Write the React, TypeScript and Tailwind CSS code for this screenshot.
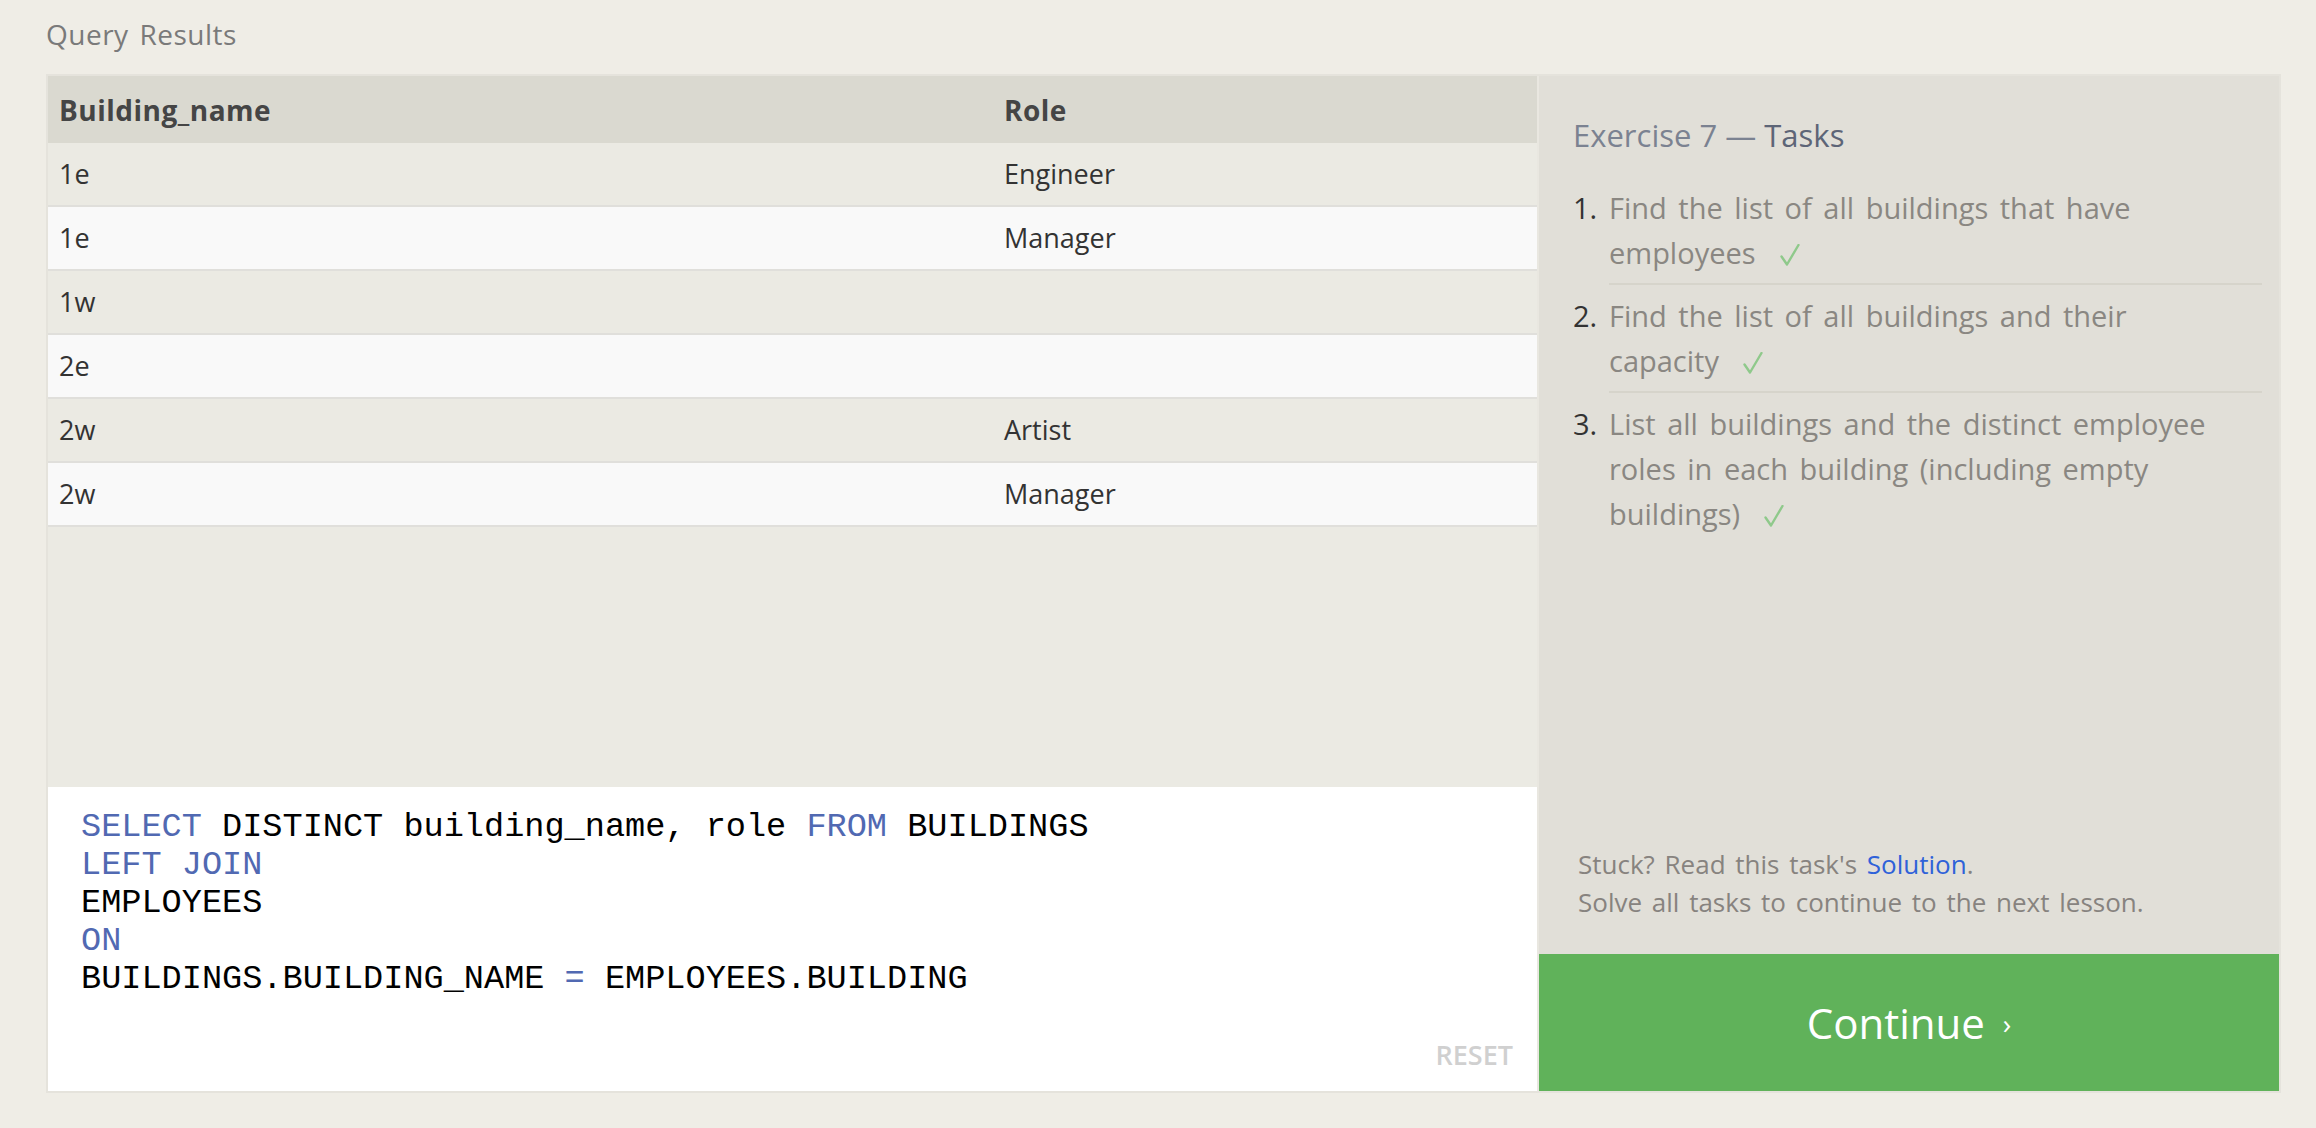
import React from 'react';

type Row = { building: string; role: string };

const rows: Row[] = [
  { building: '1e', role: 'Engineer' },
  { building: '1e', role: 'Manager' },
  { building: '1w', role: '' },
  { building: '2e', role: '' },
  { building: '2w', role: 'Artist' },
  { building: '2w', role: 'Manager' },
];

const tasks: string[][] = [
  ['Find the list of all buildings that have', 'employees'],
  ['Find the list of all buildings and their', 'capacity'],
  ['List all buildings and the distinct employee', 'roles in each building (including empty', 'buildings)'],
];

const sans = "font-['Open_Sans','Noto_Sans',sans-serif]";

function Check() {
  return (
    <svg className="ml-[24px] inline-block h-[22px] w-[20px] align-[-2px]" viewBox="0 0 20 22" fill="none">
      <path d="M1.5 12.5 L7 20.5 L18.5 1" stroke="#8fc98b" strokeWidth="2.4" strokeLinecap="round" strokeLinejoin="round" />
    </svg>
  );
}

function Kw({ children }: { children: React.ReactNode }) {
  return <span className="text-[#5169b2]">{children}</span>;
}

export default function App() {
  return (
    <div className={`min-h-screen bg-[#efede6] pl-[46px] pr-[35px] pt-[14px] ${sans}`}>
      <h2 className="mb-[20px] text-[28px] leading-[40px] tracking-[0.5px] text-[#7a7a7a] [word-spacing:3px]">Query Results</h2>

      <div className="flex h-[1019px] border-2 border-[#e5e3dc]">
        {/* results + editor */}
        <div className="flex flex-1 flex-col bg-[#ebeae3]">
          <div className="grid h-[67px] grid-cols-[945px_1fr] items-center bg-[#dad9d0] px-[11px] text-[28px] font-bold tracking-[0.5px] text-[#454545]">
            <span>Building_name</span>
            <span>Role</span>
          </div>
          {rows.map((r, i) => (
            <div
              key={i}
              className={`grid h-[64px] grid-cols-[945px_1fr] items-center border-b-2 border-[#e0dfdb] px-[11px] text-[27px] text-[#333] ${i % 2 === 0 ? 'bg-[#ebeae3]' : 'bg-[#f9f9f9]'}`}
            >
              <span>{r.building}</span>
              <span>{r.role}</span>
            </div>
          ))}
          <div className="flex-1" />

          <div className="flex h-[304px] flex-col justify-between bg-white pl-[33px] pr-[24px] pt-[21px] pb-[16px]">
            <pre className="font-['Liberation_Mono','Courier_New',monospace] text-[33.6px] leading-[38px] text-black">
              <Kw>SELECT</Kw> DISTINCT building_name, role <Kw>FROM</Kw> BUILDINGS{'\n'}
              <Kw>LEFT JOIN</Kw>{'\n'}
              EMPLOYEES{'\n'}
              <Kw>ON</Kw>{'\n'}
              BUILDINGS.BUILDING_NAME <Kw>=</Kw> EMPLOYEES.BUILDING
            </pre>
            <div className="self-end text-[27px] font-semibold leading-[40px] text-[#d0d0d0]">RESET</div>
          </div>
        </div>

        {/* tasks */}
        <div className="flex w-[742px] flex-col border-l-2 border-[#e9e7e0]">
          <div className="flex flex-1 flex-col bg-[#e1dfd8] pl-[34px] pr-[17px] pt-[39px] pb-[33px]">
            <h3 className="text-[31px] leading-[40px] text-[#7b8291]">
              Exercise 7 — <span className="text-[#5d6577]">Tasks</span>
            </h3>
            <ol className="mt-[22px]">
              {tasks.map((lines, i) => (
                <li key={i} className="flex text-[29px] leading-[45px]">
                  <span className="w-[36px] shrink-0 pt-[8px] text-[#333]">{i + 1}.</span>
                  <div className={`flex-1 py-[8px] text-[#8a8782] [word-spacing:4px] ${i < tasks.length - 1 ? 'border-b-2 border-[#d6d4cb]' : ''}`}>
                    {lines.map((l, j) => (
                      <React.Fragment key={j}>
                        {l}
                        {j < lines.length - 1 ? <br /> : <Check />}
                      </React.Fragment>
                    ))}
                  </div>
                </li>
              ))}
            </ol>
            <div className="mt-auto pl-[5px] text-[26px] leading-[38px] text-[#87837f] [word-spacing:3px]">
              <p>
                Stuck? Read this task's <a className="text-[#2f62d9]">Solution</a>.
              </p>
              <p>Solve all tasks to continue to the next lesson.</p>
            </div>
          </div>
          <button className="flex h-[137px] items-center justify-center bg-[#60b25a] text-white">
            <span className="text-[42px] leading-none">Continue</span>
            <span className="ml-[18px] text-[28px] leading-none">›</span>
          </button>
        </div>
      </div>
    </div>
  );
}
